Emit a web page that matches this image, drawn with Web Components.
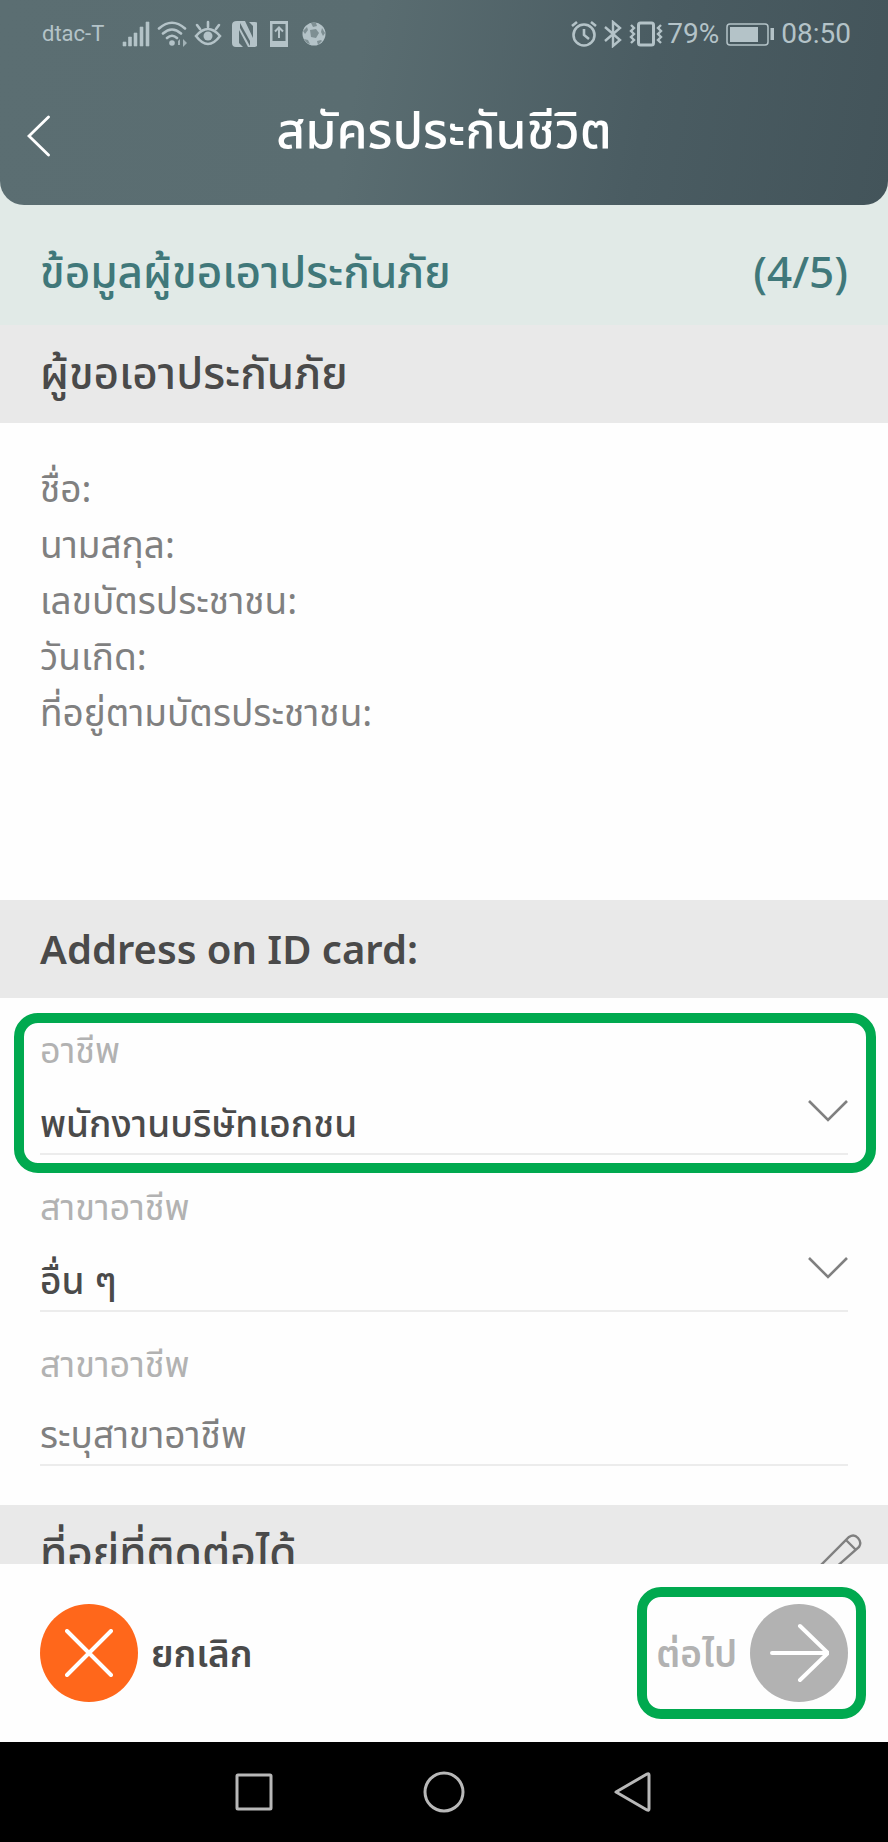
<!DOCTYPE html>
<html lang="th">
<head>
<meta charset="utf-8">
<meta name="viewport" content="width=device-width, initial-scale=1">
<title>สมัครประกันชีวิต</title>
<style>
  body {
    margin: 0;
    font-family: "Noto Sans", "Noto Sans Thai", "Open Sans", sans-serif;
    color: #4a4a4a;
    background: #fefefe;
  }
</style>
</head>
<body>

<phone-screen>
  <app-header slot="header" title="สมัครประกันชีวิต"></app-header>

  <step-bar step="(4/5)">ข้อมูลผู้ขอเอาประกันภัย</step-bar>
  <section-title>ผู้ขอเอาประกันภัย</section-title>
  <person-details>
    <div>ชื่อ:</div>
    <div>นามสกุล:</div>
    <div>เลขบัตรประชาชน:</div>
    <div>วันเกิด:</div>
    <div>ที่อยู่ตามบัตรประชาชน:</div>
  </person-details>

  <section-title lang="en">Address on ID card:</section-title>
  <form-field label="อาชีพ" type="select" value="พนักงานบริษัทเอกชน" highlight></form-field>
  <form-field label="สาขาอาชีพ" type="select" value="อื่น ๆ"></form-field>
  <form-field label="สาขาอาชีพ" type="text" placeholder="ระบุสาขาอาชีพ"></form-field>

  <section-title class="contact" edit>ที่อยู่ที่ติดต่อได้</section-title>

  <action-bar slot="footer"></action-bar>
  <nav-bar slot="footer"></nav-bar>
</phone-screen>

<script>
const icons = {
  signal: [28, 28, '<path d="M1 22h3v4H1zM6.500 17h3v9h-3zM12 13h3v13h-3zM18 7h3v19h-3zM24 2h3v24h-3z" fill="currentColor" stroke="currentColor" stroke-width=".6"/>'],
  wifi: [30, 28, '<g fill="none" stroke="currentColor" stroke-width="2.600" stroke-linecap="round"><path d="M2 8.500Q15-3 28 8.500M6 13.500Q15 5.500 24 13.500M10 18Q15 13.500 20 18"/></g><circle cx="15" cy="23" r="2.800" fill="currentColor"/><path d="M21 25v-4l2-2v6zM26 19l4 4-4 4z" fill="currentColor" opacity=".8"/>'],
  eye: [28, 28, '<g fill="none" stroke="currentColor" stroke-width="2.600" stroke-linecap="round"><path d="M2 16Q14 2 26 16Q14 32 2 16zM14 7V2M6 9 3 5M22 9l3-4"/></g><circle cx="14" cy="16" r="4.500" fill="currentColor"/>'],
  nfc: [28, 28, '<path d="M8 1h8l8 17V6l-4-4h6q3 0 3 3v18q0 4-4 4h-6L10 10v13l4 4H7q-4 0-4-4V5q0-4 5-4z" fill="currentColor"/><path d="M11 3v5l10 18v-5z" fill="#5a6c70"/>'],
  upload: [28, 28, '<path d="M6 1h18v26H6zM8.500 4v17h13V4z" fill="currentColor" fill-rule="evenodd"/><path d="M15 18V8M11 11.500 15 7.500l4 4" fill="none" stroke="currentColor" stroke-width="2"/>'],
  ball: [28, 28, '<circle cx="15" cy="14" r="11.500" fill="currentColor"/><path d="M11 10l6-1 3 4-3 5-5-1zM12 3l5-0 1 3-4 1zM4 11l4-4 1 3-3 4zM5 19l4 1 2 4-3-1zM18 21l4-1 1 1-4 4zM23 8l3 5-2 3-2-4z" fill="#5a6c70" opacity=".6"/>'],
  alarm: [26, 28, '<g fill="none" stroke="currentColor" stroke-width="2.600"><circle cx="13" cy="15" r="10.500"/><path d="M13 9v6l5 4M1 6l5-4M25 6l-5-4"/></g>'],
  bluetooth: [20, 28, '<path d="M2 7l15 13-7 6V2l7 6L2 21" fill="none" stroke="currentColor" stroke-width="2.400"/>'],
  vibrate: [34, 28, '<g fill="none" stroke="currentColor"><rect x="9.500" y="3" width="15" height="22" rx="2" stroke-width="3"/><path d="M2 5l3 3-3 3 3 3-3 3 3 3-3 3M32 5l-3 3 3 3-3 3 3 3-3 3 3 3" stroke-width="2.400"/></g>'],
  battery: [48, 28, '<rect x="1" y="4" width="41" height="21" rx="3" fill="none" stroke="currentColor" stroke-width="1.500"/><path d="M4 7h28v15H4zM44.500 8H48v12h-3.500z" fill="currentColor"/>'],
  back: [24, 42, '<path d="M21.500 2 2 21l19.500 19" fill="none" stroke="currentColor" stroke-width="2.800" stroke-linecap="round"/>'],
  chevron: [40, 24, '<path d="M1 2l19 19L39 2" fill="none" stroke="currentColor" stroke-width="2.600"/>'],
  pencil: [48, 48, '<g fill="none" stroke="currentColor" stroke-width="2.400"><path d="M1 47l3-9L35 7q5-3.500 9 1t1 9L12 46zM32 10l10 10M4 38l8 8"/></g>'],
  cross: [48, 48, '<path d="M2 2l44 44M46 2 2 46" fill="none" stroke="currentColor" stroke-width="4" stroke-linecap="round"/>'],
  arrow: [60, 60, '<path d="M3 30h56M31 3l28 27-28 27" fill="none" stroke="currentColor" stroke-width="4" stroke-linecap="round" stroke-linejoin="round"/>'],
  recent: [42, 42, '<rect x="4" y="4" width="34" height="34" rx="1" fill="none" stroke="currentColor" stroke-width="3"/>'],
  home: [42, 42, '<circle cx="21" cy="21" r="19" fill="none" stroke="currentColor" stroke-width="3"/>'],
  previous: [42, 42, '<path d="M3 21 34 3q2-1 2 1v34q0 2-2 1z" fill="none" stroke="currentColor" stroke-width="3" stroke-linejoin="round"/>']
};

function icon(name) {
  const [width, height, shape] = icons[name];
  return `<svg width="${width}" height="${height}" viewBox="0 0 ${width} ${height}" aria-hidden="true">${shape}</svg>`;
}

const baseStyle = `
  :host, * { box-sizing: border-box; }
  svg { display: block; flex: none; }
  button {
    display: flex;
    align-items: center;
    margin: 0;
    padding: 0;
    border: 0;
    background: none;
    color: inherit;
    font: inherit;
    cursor: pointer;
  }
`;

class BaseElement extends HTMLElement {
  connectedCallback() {
    if (this.shadowRoot) return;
    const template = document.createElement('template');
    template.innerHTML = `<style>${baseStyle}${this.styles()}</style>${this.markup()}`;
    this.attachShadow({ mode: 'open' }).appendChild(template.content.cloneNode(true));
  }
}

class PhoneScreen extends BaseElement {
  styles() {
    return `
      :host {
        display: flex;
        flex-direction: column;
        height: 100vh;
      }
      main {
        flex: 1;
        min-height: 0;
        overflow-y: auto;
        scrollbar-width: none;
      }
      ::slotted(.contact) { margin-top: 39px; }
    `;
  }

  markup() {
    return `
      <slot name="header"></slot>
      <main><slot></slot></main>
      <slot name="footer"></slot>
    `;
  }
}

class StatusBar extends BaseElement {
  styles() {
    return `
      :host {
        display: flex;
        align-items: center;
        justify-content: space-between;
        height: 68px;
        padding: 0 37px 0 42px;
        color: #b4c3c8;
        font: 28px/32px Roboto, sans-serif;
      }
      div { display: flex; align-items: center; gap: 7px; }
      .icons { gap: 6px; margin-right: -3px; }
      .carrier { font-size: 22px; margin-right: 11px; }
    `;
  }

  markup() {
    const left = ['signal', 'wifi', 'eye', 'nfc', 'upload', 'ball'].map(icon).join('');
    const right = ['alarm', 'bluetooth', 'vibrate'].map(icon).join('');
    return `
      <div><span class="carrier">dtac-T</span>${left}</div>
      <div><div class="icons">${right}</div><span>79%</span>${icon('battery')}<span>08:50</span></div>
    `;
  }
}

class AppHeader extends BaseElement {
  styles() {
    return `
      :host {
        display: block;
        background: #e1eae7;
      }
      header {
        height: 205px;
        border-radius: 0 0 24px 24px;
        background: linear-gradient(100deg, #5b6e72 0%, #5a6d71 40%, #4a5c62 72%, #43545a 100%);
        color: #fff;
      }
      .bar {
        display: grid;
        grid-template-columns: 1fr auto 1fr;
        align-items: center;
        height: 136px;
        padding: 0 27px;
      }
      h1 { margin: 0; padding-bottom: 14px; font-size: 50px; line-height: 72px; font-weight: 500; }
    `;
  }

  markup() {
    return `
      <header>
        <status-bar></status-bar>
        <div class="bar">
          <button type="button" aria-label="กลับ">${icon('back')}</button>
          <h1>${this.getAttribute('title')}</h1>
        </div>
      </header>
    `;
  }
}

class StepBar extends BaseElement {
  styles() {
    return `
      :host {
        display: flex;
        align-items: center;
        justify-content: space-between;
        height: 120px;
        padding: 12px 40px 0;
        background: #e1eae7;
        color: #40787a;
        font-size: 44px;
        line-height: 60px;
        font-weight: 500;
      }
    `;
  }

  markup() {
    return `<slot></slot><span>${this.getAttribute('step')}</span>`;
  }
}

class SectionTitle extends BaseElement {
  styles() {
    return `
      :host {
        display: flex;
        align-items: center;
        justify-content: space-between;
        height: 98px;
        padding: 0 26px 0 40px;
        background: #e9e9e9;
      }
      h2 { margin: 0; padding-bottom: 4px; font-size: 44px; line-height: 60px; font-weight: 500; }
      :host([lang="en"]) h2 { padding: 0; font-size: 40px; font-weight: 600; }
      button { color: #808080; }
    `;
  }

  markup() {
    const edit = this.hasAttribute('edit')
      ? `<button type="button" aria-label="แก้ไข">${icon('pencil')}</button>`
      : '';
    return `<h2><slot></slot></h2>${edit}`;
  }
}

class PersonDetails extends BaseElement {
  styles() {
    return `
      :host {
        display: block;
        min-height: 477px;
        padding: 37px 40px;
        color: #808080;
        font-size: 37px;
        line-height: 56px;
        font-weight: 400;
      }
    `;
  }

  markup() {
    return '<slot></slot>';
  }
}

class FormField extends BaseElement {
  styles() {
    return `
      :host {
        display: block;
        position: relative;
        padding: 26px 40px 0;
      }
      :host([highlight])::after {
        content: "";
        position: absolute;
        inset: 15px 12px -18px 14px;
        border: 10px solid #00a94f;
        border-radius: 24px;
        pointer-events: none;
      }
      label {
        display: block;
        margin-bottom: 2px;
        color: #b2b2b2;
        font-size: 36px;
        line-height: 52px;
        font-weight: 400;
      }
      .control {
        display: grid;
        align-items: center;
        height: 77px;
        border-bottom: 2px solid #ececec;
      }
      .control > * { grid-area: 1 / 1; }
      select, input {
        width: 100%;
        height: 75px;
        margin: 0;
        padding: 14px 0 0;
        border: 0;
        outline: 0;
        appearance: none;
        background: none;
        color: #4a4a4a;
        font: inherit;
        font-size: 37px;
        font-weight: 500;
      }
      :host([type="text"]) .control { height: 74px; }
      input { height: 72px; padding-top: 10px; font-weight: 400; }
      input::placeholder { color: #808080; opacity: 1; }
      svg { justify-self: end; margin-bottom: 10px; color: #808080; pointer-events: none; }
    `;
  }

  markup() {
    const control = this.getAttribute('type') === 'select'
      ? `<select id="control"><option>${this.getAttribute('value')}</option></select>${icon('chevron')}`
      : `<input id="control" type="text" placeholder="${this.getAttribute('placeholder')}">`;
    return `
      <label for="control">${this.getAttribute('label')}</label>
      <div class="control">${control}</div>
    `;
  }
}

class ActionBar extends BaseElement {
  styles() {
    return `
      :host {
        display: flex;
        align-items: center;
        justify-content: space-between;
        height: 178px;
        padding: 0 22px 0 40px;
        background: #fefefe;
      }
      button { gap: 13px; font-size: 37px; line-height: 56px; font-weight: 600; }
      .circle {
        display: grid;
        place-items: center;
        width: 98px;
        height: 98px;
        border-radius: 50%;
        background: #ff671b;
        color: #fff;
      }
      .next {
        height: 132px;
        padding: 0 8px 0 9px;
        border: 10px solid #00a94f;
        border-radius: 24px;
        color: #b2b2b2;
      }
      .next .circle { background: #b2b2b2; }
    `;
  }

  markup() {
    return `
      <button type="button"><span class="circle">${icon('cross')}</span>ยกเลิก</button>
      <button type="button" class="next">ต่อไป<span class="circle">${icon('arrow')}</span></button>
    `;
  }
}

class NavBar extends BaseElement {
  styles() {
    return `
      :host { display: block; background: #000; color: #b8b8b8; }
      nav {
        display: flex;
        align-items: center;
        justify-content: center;
        gap: 148px;
        height: 100px;
      }
    `;
  }

  markup() {
    return `
      <nav>
        <button type="button" aria-label="แอปล่าสุด">${icon('recent')}</button>
        <button type="button" aria-label="หน้าหลัก">${icon('home')}</button>
        <button type="button" aria-label="ย้อนกลับ">${icon('previous')}</button>
      </nav>
    `;
  }
}

(() => {

  window.customElements.define('phone-screen', PhoneScreen);
  window.customElements.define('status-bar', StatusBar);
  window.customElements.define('app-header', AppHeader);
  window.customElements.define('step-bar', StepBar);
  window.customElements.define('section-title', SectionTitle);
  window.customElements.define('person-details', PersonDetails);
  window.customElements.define('form-field', FormField);
  window.customElements.define('action-bar', ActionBar);
  window.customElements.define('nav-bar', NavBar);

})();
</script>
</body>
</html>
